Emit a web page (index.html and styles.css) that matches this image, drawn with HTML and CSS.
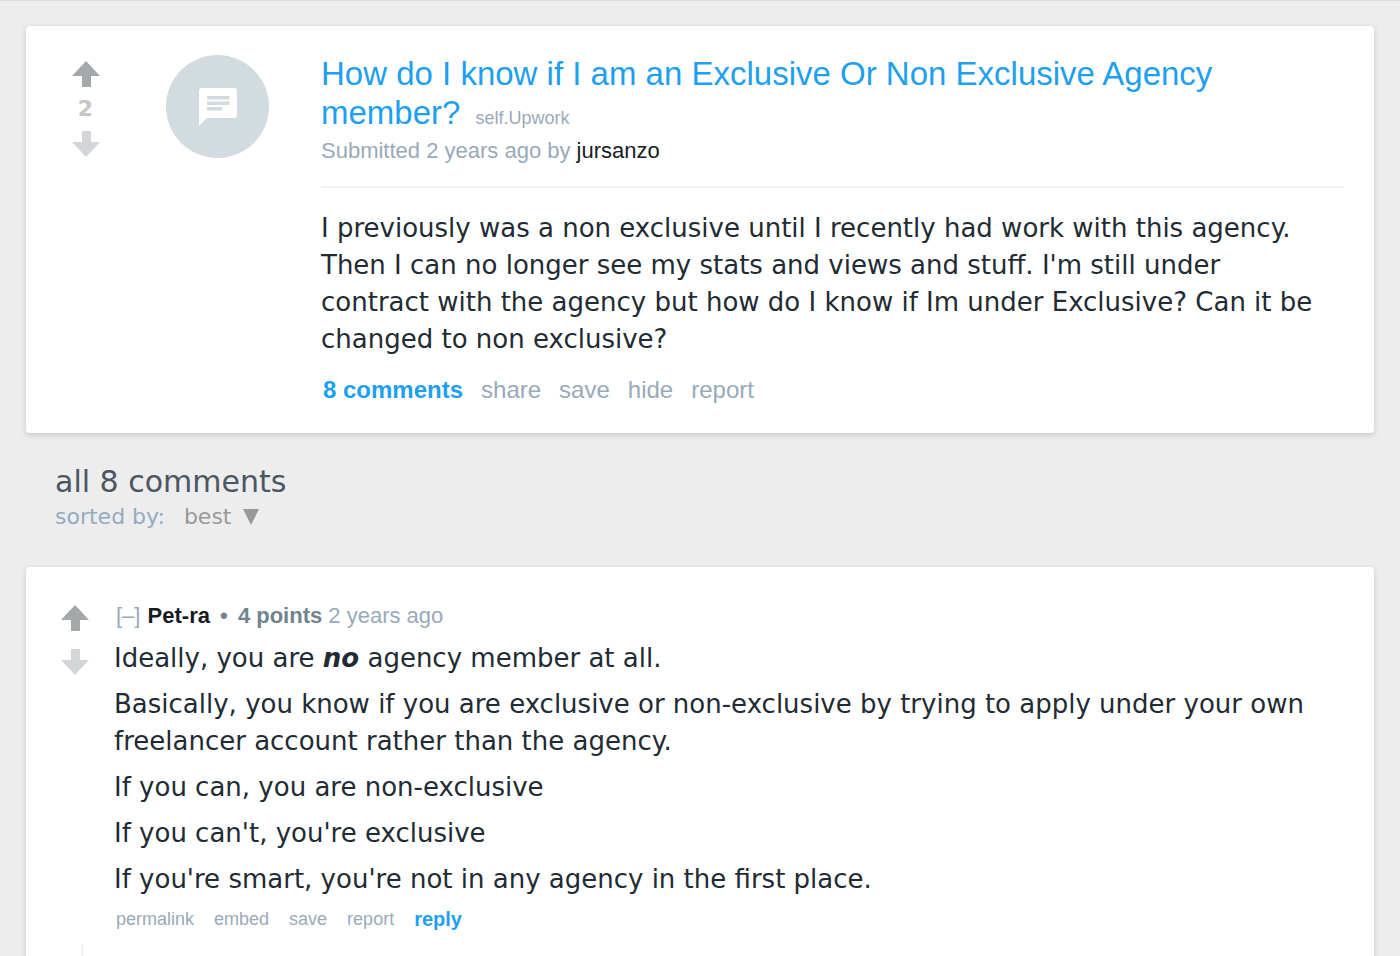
FILE: index.html
```html
<!DOCTYPE html>
<html lang="en">
<head>
    <meta charset="UTF-8">
    <meta name="viewport" content="width=device-width, initial-scale=1.0">
    <title>How do I know if I am an Exclusive Or Non Exclusive Agency member? : Upwork</title>
    <link rel="stylesheet" href="styles.css">
</head>
<body>
    <main>
        <article class="card post">
            <div class="votes">
                <button class="arrow up" aria-label="upvote">
                    <svg width="28" height="26" viewBox="0 0 28 26"><path d="M14 0L28 15H19V26H10V15H0Z"/></svg>
                </button>
                <div class="score">2</div>
                <button class="arrow down" aria-label="downvote">
                    <svg width="28" height="26" viewBox="0 0 28 26"><path d="M14 26L28 11H19V0H10V11H0Z"/></svg>
                </button>
            </div>

            <a href="#" class="thumbnail" aria-label="self post">
                <svg width="38" height="38" viewBox="0 0 38 38">
                    <path fill="#fff" d="M3 0H35Q38 0 38 3V27Q38 30 35 30H8L0 38V3Q0 0 3 0Z"/>
                    <path fill="#d2dbe0" d="M8 8H30.500V11.500H8ZM8 13.500H30.500V17H8ZM8 19H23V22.500H8Z"/>
                </svg>
            </a>

            <div class="entry">
                <h1 class="title">
                    <a href="#">How do I know if I am an Exclusive Or Non Exclusive Agency member?</a>
                    <a href="#" class="domain">self.Upwork</a>
                </h1>
                <p class="tagline">Submitted 2 years ago by <a href="#" class="author">jursanzo</a></p>
                <div class="text post-text">
                    <p>I previously was a non exclusive until I recently had work with this agency. Then I can no longer see my stats and views and stuff. I'm still under contract with the agency but how do I know if Im under Exclusive? Can it be changed to non exclusive?</p>
                </div>
                <div class="buttons">
                    <a href="#" class="primary">8 comments</a>
                    <a href="#">share</a>
                    <a href="#">save</a>
                    <a href="#">hide</a>
                    <a href="#">report</a>
                </div>
            </div>
        </article>

        <section class="comments-header">
            <h2>all 8 comments</h2>
            <div class="sort">
                <label for="sort">sorted by:</label>
                <select id="sort">
                    <option>best</option>
                </select>
                <svg width="16" height="16" viewBox="0 0 16 16"><path d="M0 0H16L8 16Z"/></svg>
            </div>
        </section>

        <div class="card thread">
            <article class="comment">
                <div class="votes">
                    <button class="arrow up" aria-label="upvote">
                        <svg width="28" height="26" viewBox="0 0 28 26"><path d="M14 0L28 15H19V26H10V15H0Z"/></svg>
                    </button>
                    <button class="arrow down" aria-label="downvote">
                        <svg width="28" height="26" viewBox="0 0 28 26"><path d="M14 26L28 11H19V0H10V11H0Z"/></svg>
                    </button>
                </div>

                <div class="entry">
                    <p class="tagline">
                        <a href="#">[–]</a>
                        <a href="#" class="author">Pet-ra</a>
                        <span class="points"><span class="dot">•</span> 4 points</span>
                        2 years ago
                    </p>
                    <div class="text">
                        <p>Ideally, you are <strong><em>no</em></strong> agency member at all.</p>
                        <p>Basically, you know if you are exclusive or non-exclusive by trying to apply under your own freelancer account rather than the agency.</p>
                        <p>If you can, you are non-exclusive</p>
                        <p>If you can't, you're exclusive</p>
                        <p>If you're smart, you're not in any agency in the first place.</p>
                    </div>
                    <div class="buttons">
                        <a href="#">permalink</a>
                        <a href="#">embed</a>
                        <a href="#">save</a>
                        <a href="#">report</a>
                        <a href="#" class="primary">reply</a>
                    </div>
                </div>
            </article>
            <div class="replies"></div>
        </div>
    </main>
</body>
</html>
```
FILE: styles.css
```css
* {
    box-sizing: border-box;
}

body {
    margin: 0;
    background: #ededed;
    border-top: 1px solid #dfdfdf;
    font-family: "Liberation Sans", Arial, sans-serif;
    color: #222b33;
}

main {
    padding: 25px 26px 0;
}

h1, h2, p {
    margin: 0;
    font-weight: normal;
}

a {
    color: inherit;
    text-decoration: none;
}

svg {
    display: block;
}

.card {
    background: #fff;
    border-radius: 4px;
    box-shadow: 0 2px 6px rgba(0, 0, 0, 0.16);
}

.post,
.comment {
    display: flex;
    align-items: flex-start;
}

.entry {
    flex: 1;
    min-width: 0;
}

/* Votes */
.votes {
    display: flex;
    flex-direction: column;
    align-items: center;
}

.arrow {
    padding: 0;
    border: none;
    background: none;
    cursor: pointer;
}

.up {
    fill: #a5a8aa;
}

.down {
    fill: #d3d5d8;
}

.score {
    font: bold 22px/44px "DejaVu Sans", Verdana, sans-serif;
    color: #c6c6c6;
}

/* Post */
.post {
    padding: 28px 30px;
}

.post .votes {
    width: 59px;
    padding-top: 7px;
}

.thumbnail {
    display: flex;
    align-items: center;
    justify-content: center;
    width: 103px;
    height: 103px;
    margin: 1px 52px 0 51px;
    border-radius: 50%;
    background: #d2dbe0;
}

.title {
    font-size: 33px;
    line-height: 39px;
    color: #1e9ff0;
}

.domain {
    margin-left: 6px;
    font-size: 18px;
    line-height: 20px;
    color: #99aaba;
}

.tagline {
    font-size: 22px;
    line-height: 26px;
    color: #99aaba;
}

.author {
    color: #181c22;
}

.post .tagline {
    padding: 6px 0 22px;
    border-bottom: 2px solid #edf1f3;
}

.text {
    font: 26px/37px "DejaVu Sans", Verdana, sans-serif;
    color: #222b33;
}

.post-text {
    padding: 22px 24px 17px 0;
}

.buttons {
    display: flex;
    flex-wrap: wrap;
    gap: 18px;
    padding-left: 2px;
    font-size: 24px;
    line-height: 30px;
    color: #99aaba;
}

.primary {
    font-weight: bold;
    color: #1e9ff0;
}

/* Sort bar */
.comments-header {
    padding: 30px 29px 34px;
    font-family: "DejaVu Sans", Verdana, sans-serif;
}

.comments-header h2 {
    font-size: 30px;
    line-height: 38px;
    color: #4b5663;
}

.sort {
    display: flex;
    align-items: center;
    font-size: 22px;
    line-height: 32px;
    color: #93abbf;
}

.sort select {
    appearance: none;
    margin: 0 11px 0 19px;
    padding: 0;
    border: none;
    background: none;
    font: inherit;
    color: #999;
}

.sort svg {
    fill: #999;
}

/* Comments */
.thread {
    padding: 36px 30px 0;
}

.comment .votes {
    gap: 18px;
    width: 38px;
    margin-right: 20px;
    padding-top: 2px;
}

.comment .tagline {
    padding-left: 2px;
}

.comment .author {
    margin-left: 1px;
    font-weight: bold;
}

.points {
    font-weight: bold;
    color: #70838f;
}

.dot {
    margin: 0 4px;
}

.comment .text {
    padding-top: 11px;
}

.comment .text p {
    margin-bottom: 9px;
}

.comment .buttons {
    gap: 20px;
    font-size: 18px;
    line-height: 24px;
}

.comment .primary {
    font-size: 20px;
}

.replies {
    min-height: 60px;
    margin: 13px 0 0 25px;
    border-left: 2px solid #edf1f3;
}
```
